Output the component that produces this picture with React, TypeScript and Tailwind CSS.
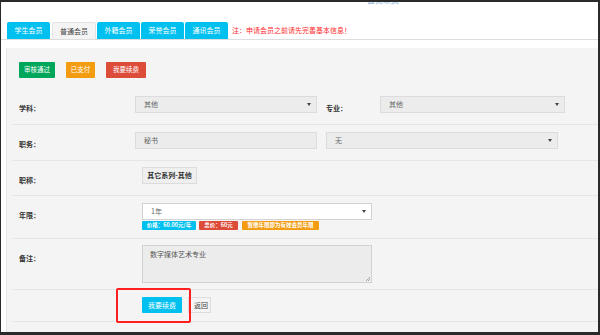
import React from "react";

const font = "font-['Noto_Sans_CJK_SC','Noto_Sans',sans-serif]";

function Caret() {
  return (
    <svg width="4" height="3" viewBox="0 0 4 3" className="shrink-0">
      <path d="M0 0 H4 L2 3 Z" fill="#444" />
    </svg>
  );
}

function FakeSelect({
  value,
  width,
  white,
}: {
  value: string;
  width: string;
  white?: boolean;
}) {
  return (
    <div
      className={`${width} h-[17px] flex items-center justify-between pl-[8px] pr-[5px] border ${
        white ? "bg-white border-[#d2d2d2]" : "bg-[#ececec] border-[#dcdcdc]"
      } text-[7px] text-[#666]`}
    >
      <span>{value}</span>
      <Caret />
    </div>
  );
}

function Label({ text, width }: { text: string; width: string }) {
  return (
    <div className={`${width} shrink-0 pl-[7px] pt-[14px] text-[7px] leading-[10px] font-semibold text-[#333]`}>
      {text}
    </div>
  );
}

export default function App() {
  const tabs = [
    { name: "学生会员", w: "w-[43px]", active: false },
    { name: "普通会员", w: "w-[44px]", active: true },
    { name: "外籍会员", w: "w-[43px]", active: false },
    { name: "荣誉会员", w: "w-[43px]", active: false },
    { name: "通讯会员", w: "w-[43px]", active: false },
  ];

  return (
    <div
      className={`w-[600px] h-[335px] overflow-hidden bg-white border-t-2 border-l border-r-2 border-b-[3px] border-[#2a2a2a] ${font}`}
    >
      {/* clipped page title */}
      <div className="h-[20px] overflow-hidden pl-[366px]">
        <div className="-mt-[7px] text-[8px] leading-[10px] text-[#8ab4dc]">会员续费</div>
      </div>

      {/* tabs */}
      <div className="flex items-stretch h-[18px] pl-[6px] border-b border-[#dddddd]">
        {tabs.map((t, i) => (
          <div
            key={t.name}
            className={`${t.w} ${i === 0 ? "mr-[2px]" : "mr-[1px]"} flex items-center justify-center text-[7px] rounded-t-[2px] ${
              t.active
                ? "bg-[#f4f4f4] text-[#444] border border-b-0 border-[#e2e2e2]"
                : "bg-[#00c0ef] text-white"
            }`}
          >
            {t.name}
          </div>
        ))}
        <div className="ml-[3px] flex items-center text-[7px] text-[#ff2a2a]">
          注：申请会员之前请先完善基本信息！
        </div>
      </div>

      {/* panel */}
      <div className="relative mt-[8px] ml-[5px] h-[284px] bg-[#f4f4f4] border-l border-[#e6e6e6] pl-[5px]">
        <div className="flex items-start gap-0 pt-[14px] pl-[7px] h-[41px] text-[6.5px] text-white">
          <div className="w-[36px] h-[16px] flex items-center justify-center bg-[#00a65a] rounded-[1px]">审核通过</div>
          <div className="ml-[11px] w-[29px] h-[16px] flex items-center justify-center bg-[#f39c12] rounded-[1px]">已支付</div>
          <div className="ml-[11px] w-[40px] h-[16px] flex items-center justify-center bg-[#dd4b39] rounded-[1px]">我要续费</div>
        </div>

        {/* 学科 / 专业 */}
        <div className="flex items-start h-[36px] border-b border-[#e6e6e6]">
          <Label text="学科：" width="w-[123px]" />
          <div className="mt-[7px]">
            <FakeSelect value="其他" width="w-[182px]" />
          </div>
          <div className="ml-[9px] w-[54px] pt-[14px] text-[7px] leading-[10px] font-semibold text-[#333]">专业：</div>
          <div className="mt-[7px]">
            <FakeSelect value="其他" width="w-[185px]" />
          </div>
        </div>

        {/* 职务 */}
        <div className="flex items-start h-[36px] border-b border-[#e6e6e6]">
          <Label text="职务：" width="w-[123px]" />
          <div className="mt-[7px] w-[182px] h-[17px] flex items-center pl-[8px] bg-[#ececec] border border-[#dcdcdc] text-[7px] text-[#666]">
            秘书
          </div>
          <div className="mt-[7px] ml-[9px]">
            <FakeSelect value="无" width="w-[232px]" />
          </div>
        </div>

        {/* 职称 */}
        <div className="flex items-start h-[35px] border-b border-[#e6e6e6]">
          <Label text="职称：" width="w-[130px]" />
          <div className="mt-[6px] w-[55px] h-[17px] flex items-center justify-center bg-[#efefef] border border-[#dcdcdc] text-[7px] font-semibold text-[#333]">
            其它系列-其他
          </div>
        </div>

        {/* 年限 */}
        <div className="flex items-start h-[43px] border-b border-[#e6e6e6]">
          <Label text="年限：" width="w-[130px]" />
          <div className="mt-[7px] flex flex-col">
            <FakeSelect value="1年" width="w-[230px]" white />
            <div className="mt-[1px] flex gap-[3px] text-[5.5px] leading-[9px] font-bold text-white">
              <span className="w-[54px] h-[9px] flex items-center justify-center bg-[#00c0ef] rounded-[1px]">价格：60.00元/年</span>
              <span className="w-[39px] h-[9px] flex items-center justify-center bg-[#dd4b39] rounded-[1px]">总价：60元</span>
              <span className="ml-[1px] w-[77px] h-[9px] flex items-center justify-center bg-[#f39c12] rounded-[1px]">暂缴年限即为有效会员年限</span>
            </div>
          </div>
        </div>

        {/* 备注 */}
        <div className="flex items-start h-[51px] border-b border-[#e6e6e6]">
          <Label text="备注：" width="w-[130px]" />
          <div className="relative mt-[6px] w-[230px] h-[38px] bg-[#ececec] border border-[#d2d2d2] pl-[7px] pt-[3px] text-[7px] text-[#555]">
            数字媒体艺术专业
            <svg width="5" height="5" viewBox="0 0 5 5" className="absolute right-[1px] bottom-[1px]">
              <path d="M1 5 L5 1 M3 5 L5 3" stroke="#999" strokeWidth="0.8" />
            </svg>
          </div>
        </div>

        {/* actions */}
        <div className="flex items-start h-[32px] border-b border-[#e6e6e6]">
          <div className="w-[130px] shrink-0" />
          <div className="mt-[7px] w-[40px] h-[16px] flex items-center justify-center bg-[#00c0ef] rounded-[1px] text-[7px] text-white">
            我要续费
          </div>
          <div className="mt-[7px] ml-[6px] w-[23px] h-[16px] flex items-center justify-end pr-[2px] bg-[#f4f4f4] border border-[#dcdcdc] text-[7px] text-[#444]">
            返回
          </div>
        </div>

        {/* red annotation box */}
        <div className="absolute left-[109px] top-[240px] w-[75px] h-[35px] border-2 border-[#ff1f1f] rounded-[2px]" />
      </div>
    </div>
  );
}
